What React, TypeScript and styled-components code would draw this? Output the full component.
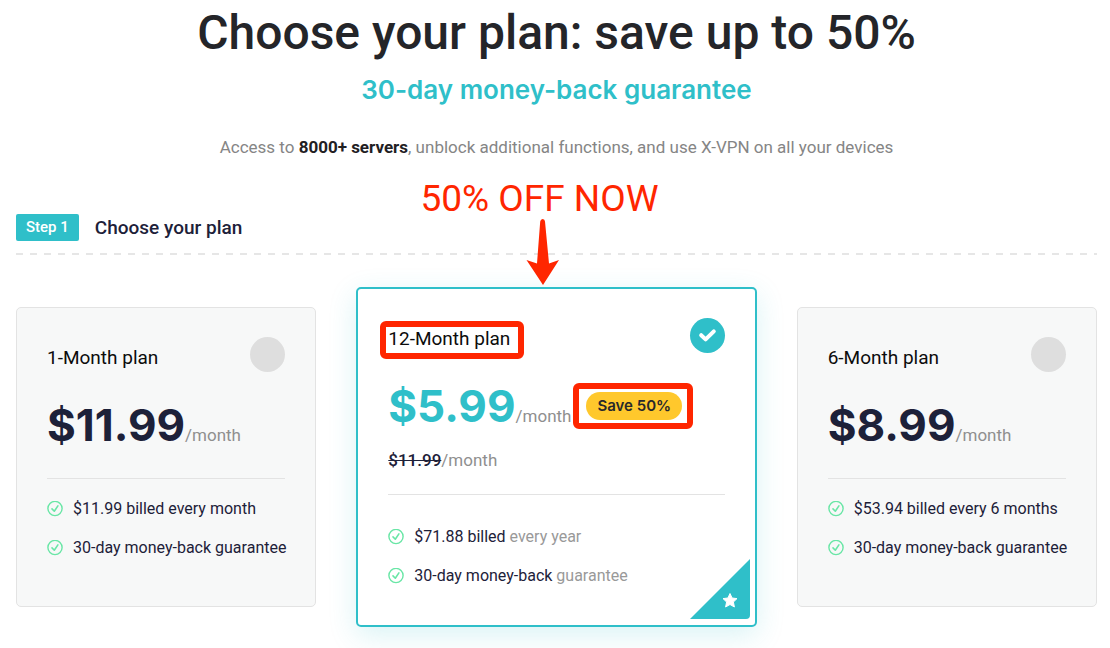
import React from "react";
import styled, { createGlobalStyle } from "styled-components";

const teal = "#2fbfc9";
const navy = "#1d2139";
const grey = "#8f8f8f";
const red = "#ff2600";
const display = `Inter, "Liberation Sans", sans-serif`;

const GlobalStyle = createGlobalStyle`
  *, *::before, *::after { box-sizing: border-box; }
  body {
    margin: 0;
    background: #fff;
    color: ${navy};
    font-family: Roboto, "Liberation Sans", sans-serif;
    overflow-x: hidden;
  }
  h1, h2, h3, p, ul, fieldset { margin: 0; padding: 0; border: 0; min-width: 0; }
`;

const Page = styled.main`
  padding: 3px 13px 21px 16px;
`;

const Intro = styled.header`
  text-align: center;
`;

const Headline = styled.h1`
  font-size: 48px;
  line-height: 60px;
  font-weight: 500;
  color: #242529;
`;

const Guarantee = styled.h2`
  margin-top: 10px;
  font-family: ${display};
  font-size: 26px;
  line-height: 34px;
  font-weight: 600;
  color: ${teal};
`;

const Description = styled.p`
  margin-top: 28px;
  font-size: 17px;
  line-height: 24px;
  color: #858585;

  strong {
    font-weight: 700;
    color: #1f2023;
  }
`;

const StepBar = styled.div`
  display: flex;
  align-items: center;
  gap: 16px;
  margin-top: 55px;
  padding-bottom: 14px;
  background: repeating-linear-gradient(90deg, #e6e6e6 0 7px, transparent 7px 14px) left bottom / 100% 2px no-repeat;
`;

const StepTag = styled.span`
  padding: 0 10px;
  border-radius: 2px;
  background: ${teal};
  color: #fff;
  font-size: 15px;
  line-height: 27px;
  font-weight: 500;
`;

const StepTitle = styled.h2`
  font-size: 19px;
  line-height: 27px;
  font-weight: 500;
`;

const Plans = styled.fieldset`
  display: grid;
  grid-template-columns: minmax(0, 3fr) minmax(0, 4fr) minmax(0, 3fr);
  align-items: center;
  gap: 40px;
  margin-top: 32px;
`;

const Card = styled.label<{ $featured?: boolean }>`
  position: relative;
  display: block;
  padding: ${(p) => (p.$featured ? "29px 30px 30px" : "29px 30px 39px")};
  border: ${(p) => (p.$featured ? `2px solid ${teal}` : "1px solid #e3e3e3")};
  border-radius: 5px;
  background: ${(p) => (p.$featured ? "#fff" : "#f7f8f8")};
  box-shadow: ${(p) => (p.$featured ? "0 8px 28px rgba(47, 191, 201, 0.18)" : "none")};
  cursor: pointer;
`;

const CardHead = styled.div`
  display: flex;
  align-items: flex-end;
  justify-content: space-between;
  height: 35px;
`;

const PlanName = styled.span`
  position: relative;
  font-size: 19px;
  line-height: 28px;
  font-weight: 400;
  color: #0c0c0c;
  white-space: nowrap;
`;

const RadioWrap = styled.span`
  position: relative;
  display: grid;
  width: 35px;
  height: 35px;

  svg {
    position: absolute;
    inset: 0;
    pointer-events: none;
  }
`;

const Radio = styled.input`
  appearance: none;
  width: 35px;
  height: 35px;
  margin: 0;
  border-radius: 50%;
  background: #dedede;

  &:checked { background: ${teal}; }
  & + svg { display: none; }
  &:checked + svg { display: block; }
`;

const PriceRow = styled.div`
  display: flex;
  align-items: baseline;
  height: 56px;
  margin-top: 25px;
  white-space: nowrap;
`;

const Price = styled.span<{ $featured?: boolean }>`
  font-family: ${display};
  font-size: 44px;
  line-height: 56px;
  font-weight: 700;
  color: ${(p) => (p.$featured ? teal : navy)};
`;

const Period = styled.span`
  font-size: 17px;
  line-height: 24px;
  color: ${grey};
`;

const Saving = styled.span`
  position: relative;
  align-self: center;
  margin-left: 15px;
  padding: 0 11px;
  border-radius: 14px;
  background: #ffc82c;
  color: #27282b;
  font-family: ${display};
  font-size: 15px;
  line-height: 28px;
  font-weight: 600;
`;

const OldPrice = styled.div`
  margin-top: 14px;
  font-size: 17px;
  line-height: 24px;
  color: ${grey};

  s {
    font-weight: 500;
    color: ${navy};
  }
`;

const Features = styled.ul<{ $featured?: boolean }>`
  margin-top: ${(p) => (p.$featured ? 22 : 25)}px;
  padding-top: ${(p) => (p.$featured ? 22 : 10)}px;
  border-top: 1px solid #e3e3e3;
  list-style: none;
`;

const Feature = styled.li`
  display: flex;
  align-items: center;
  gap: 10px;
  font-size: 16px;
  line-height: 39px;
  white-space: nowrap;

  svg { flex: none; }

  em {
    font-style: normal;
    color: #999;
  }
`;

const Corner = styled.svg`
  position: absolute;
  right: 5px;
  bottom: 6px;
`;

const Outline = styled.span<{ $inset: string }>`
  position: absolute;
  inset: ${(p) => p.$inset};
  border: 6px solid ${red};
  border-radius: 6px;
  pointer-events: none;
`;

const Callout = styled.span`
  position: absolute;
  left: 0;
  right: 34px;
  bottom: calc(100% + 4px);
  display: flex;
  flex-direction: column;
  align-items: center;
  color: ${red};
  font-size: 37px;
  line-height: 40px;
  white-space: nowrap;
  pointer-events: none;

  svg { margin-left: 8px; }
`;

const TickCircle = () => (
  <svg width="16" height="16" viewBox="0 0 16 16" fill="none" stroke="#69e6a6" strokeLinecap="round" strokeLinejoin="round" aria-hidden="true">
    <circle cx="8" cy="7.5" r="7.1" strokeWidth="1.4" />
    <path d="M5 7.9 7.3 10.2 10.9 4.9" strokeWidth="1.6" />
  </svg>
);

type Plan = {
  id: string;
  name: string;
  price: string;
  oldPrice?: string;
  saving?: string;
  features: [string, string?][];
};

const plans: Plan[] = [
  {
    id: "1m",
    name: "1-Month plan",
    price: "$11.99",
    features: [["$11.99 billed every month"], ["30-day money-back guarantee"]],
  },
  {
    id: "12m",
    name: "12-Month plan",
    price: "$5.99",
    oldPrice: "$11.99",
    saving: "Save 50%",
    features: [["$71.88 billed", "every year"], ["30-day money-back", "guarantee"]],
  },
  {
    id: "6m",
    name: "6-Month plan",
    price: "$8.99",
    features: [["$53.94 billed every 6 months"], ["30-day money-back guarantee"]],
  },
];

const PlanCard = ({ plan }: { plan: Plan }) => {
  const featured = Boolean(plan.saving);
  return (
    <Card $featured={featured} htmlFor={plan.id}>
      {featured && (
        <Callout>
          50% OFF NOW
          <svg width="34" height="66" viewBox="0 0 34 66" fill={red} aria-hidden="true">
            <path d="M14.2 2.5Q14.6 0 16.7 0T19 2.5L23 44.5 33 41 17 66 .5 41 11 44.5Z" />
          </svg>
        </Callout>
      )}
      <CardHead>
        <PlanName>
          {plan.name}
          {featured && <Outline $inset="-4px -14px -6px -8px" />}
        </PlanName>
        <RadioWrap>
          <Radio type="radio" name="plan" id={plan.id} defaultChecked={featured} />
          <svg width="35" height="35" viewBox="0 0 35 35" fill="none" stroke="#fff" strokeWidth="4" strokeLinecap="round" strokeLinejoin="round" aria-hidden="true">
            <path d="M11.2 17.2 15.6 21.4 23.8 13.4" />
          </svg>
        </RadioWrap>
      </CardHead>
      <PriceRow>
        <Price $featured={featured}>{plan.price}</Price>
        <Period>/month</Period>
        {plan.saving && (
          <Saving>
            {plan.saving}
            <Outline $inset="-9px -11px -9px -13px" />
          </Saving>
        )}
      </PriceRow>
      {plan.oldPrice && (
        <OldPrice>
          <s>{plan.oldPrice}</s>/month
        </OldPrice>
      )}
      <Features $featured={featured}>
        {plan.features.map(([main, soft]) => (
          <Feature key={main}>
            <TickCircle />
            <span>
              {main}
              {soft && <em> {soft}</em>}
            </span>
          </Feature>
        ))}
      </Features>
      {featured && (
        <Corner width="60" height="60" viewBox="0 0 60 60" aria-hidden="true">
          <path d="M60 0V56Q60 60 56 60H0Z" fill={teal} />
          <path
            d="M40 34.5 42.1 39 47 39.6 43.4 43 44.4 48 40 45.5 35.6 48 36.6 43 33 39.6 37.9 39Z"
            fill="#fff"
            stroke="#fff"
            strokeLinejoin="round"
          />
        </Corner>
      )}
    </Card>
  );
};

export default function App() {
  return (
    <>
      <GlobalStyle />
      <Page>
        <Intro>
          <Headline>Choose your plan: save up to 50%</Headline>
          <Guarantee>30-day money-back guarantee</Guarantee>
          <Description>
            Access to <strong>8000+ servers</strong>, unblock additional functions, and use X-VPN on all your devices
          </Description>
        </Intro>
        <StepBar>
          <StepTag>Step 1</StepTag>
          <StepTitle>Choose your plan</StepTitle>
        </StepBar>
        <Plans aria-label="Choose your plan">
          {plans.map((plan) => (
            <PlanCard key={plan.id} plan={plan} />
          ))}
        </Plans>
      </Page>
    </>
  );
}
